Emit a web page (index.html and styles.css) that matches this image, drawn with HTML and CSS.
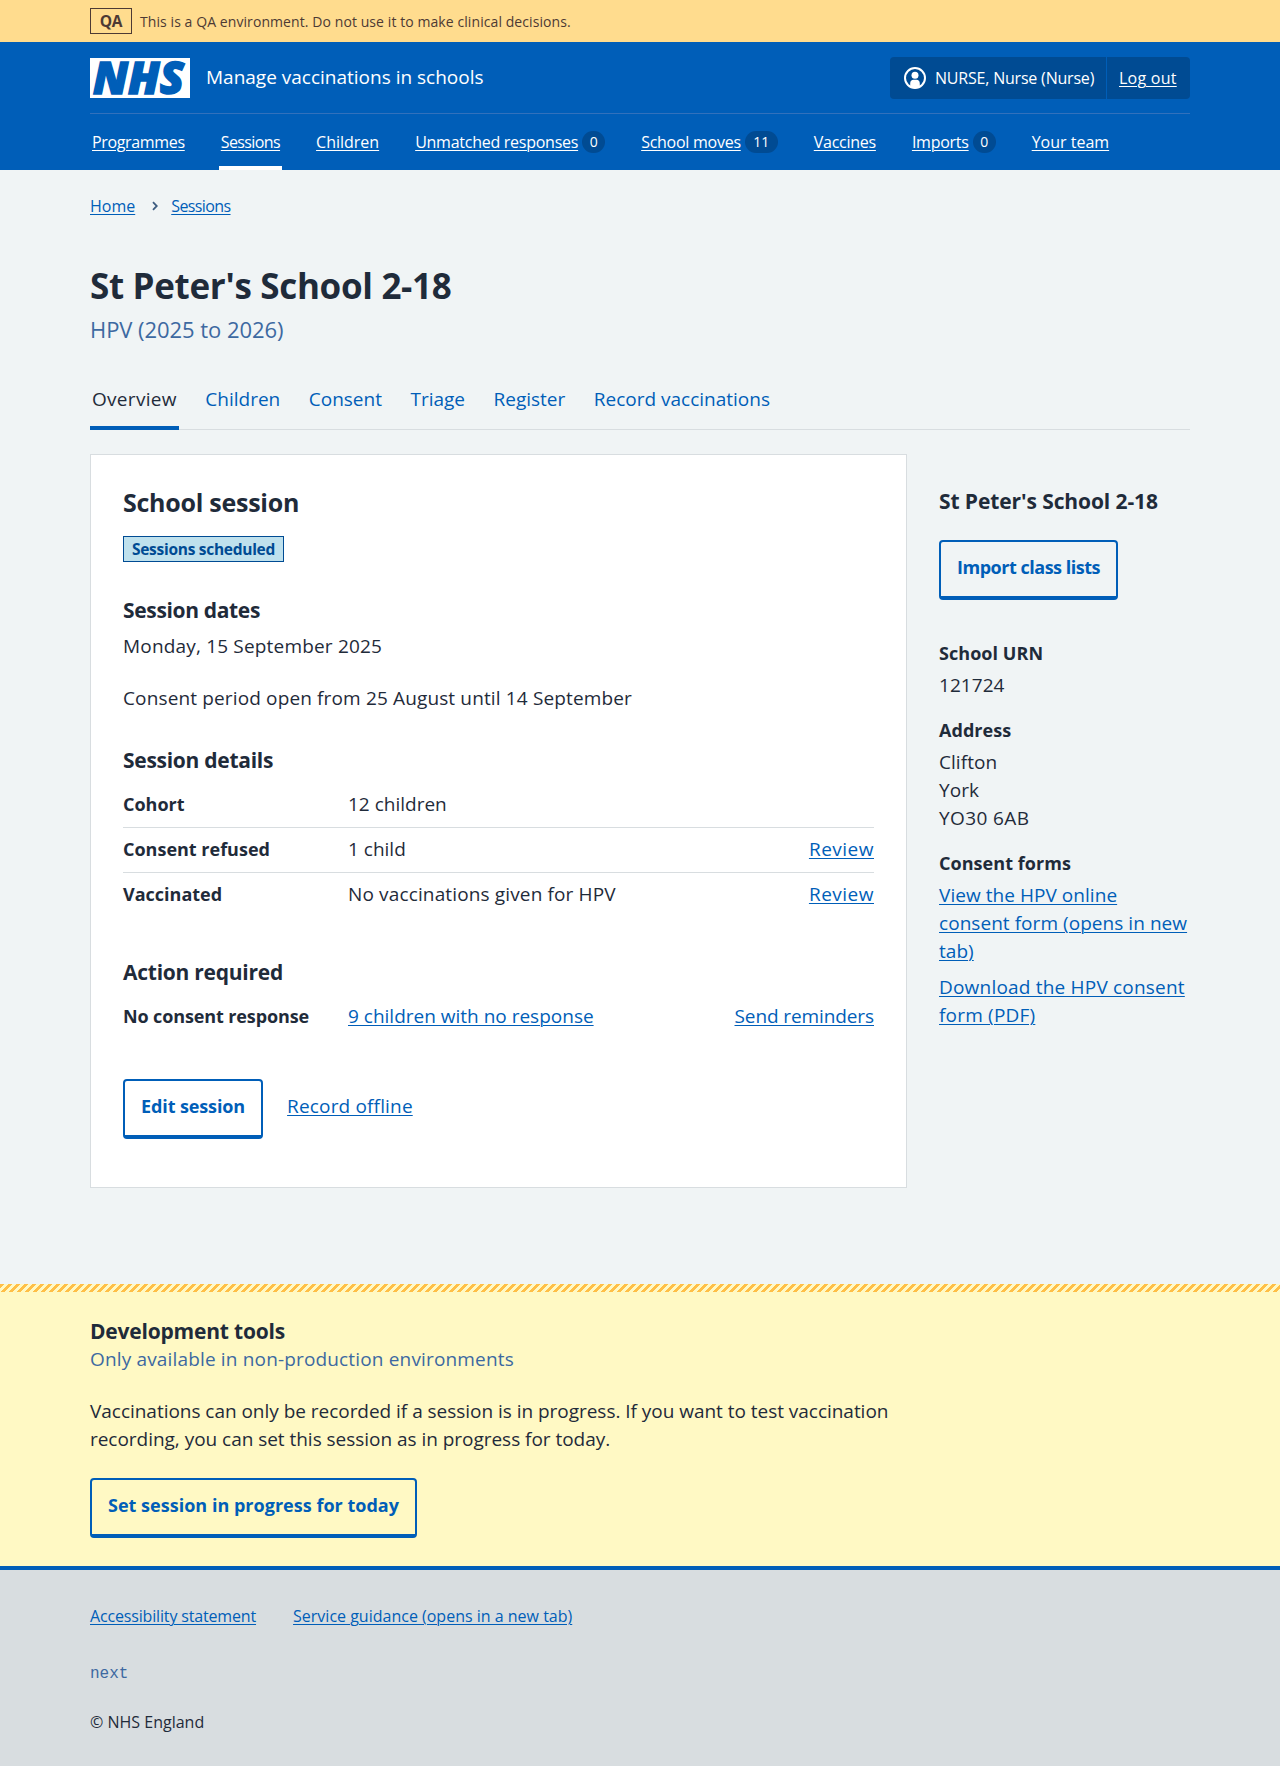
FILE: index.html
```html
<!DOCTYPE html>
<html lang="en">
<head>
<meta charset="utf-8">
<title>St Peter's School 2-18 – Manage vaccinations in schools</title>
<link rel="stylesheet" href="styles.css">
</head>
<body>
<div class="environment">
  <div class="container environment-inner"><strong class="environment-tag">QA</strong><span>This is a QA environment. Do not use it to make clinical decisions.</span></div>
</div>
<header class="header">
  <div class="container">
    <div class="header-top">
      <svg class="logo" viewBox="0 0 100 40" role="img" aria-label="NHS"><rect width="100" height="40" fill="#fff"/><text class="logo-text" x="3" y="36" textLength="91" lengthAdjust="spacingAndGlyphs">NHS</text></svg>
      <span class="service">Manage vaccinations in schools</span>
      <div class="account">
        <span class="account-user">
          <svg class="account-icon" viewBox="0 0 22 22" aria-hidden="true"><circle cx="11" cy="11" r="10" fill="none" stroke="#fff" stroke-width="2"/><circle cx="11" cy="8.3" r="3.5" fill="#fff"/><path d="M6.2 20v-3.6c0-2.2 1.4-3.6 3.2-3.6h3.2c1.8 0 3.2 1.400 3.200 3.600V20c-3 1.600-6.600 1.600-9.600 0z" fill="#fff"/></svg>
          <span>NURSE, Nurse (Nurse)</span>
        </span>
        <span class="account-out"><a href="#">Log out</a></span>
      </div>
    </div>
    <nav class="nav">
      <div class="nav-item"><a href="#">Programmes</a></div>
      <div class="nav-item current"><a href="#">Sessions</a></div>
      <div class="nav-item"><a href="#">Children</a></div>
      <div class="nav-item"><a href="#">Unmatched responses</a><span class="count">0</span></div>
      <div class="nav-item"><a href="#">School moves</a><span class="count count-wide">11</span></div>
      <div class="nav-item"><a href="#">Vaccines</a></div>
      <div class="nav-item"><a href="#">Imports</a><span class="count">0</span></div>
      <div class="nav-item"><a href="#">Your team</a></div>
    </nav>
  </div>
</header>
<main class="container main">
  <nav class="breadcrumb"><a href="#">Home</a><svg class="chevron" viewBox="0 0 6 10" aria-hidden="true"><path d="M1 1.200l3.800 3.800L1 8.800" fill="none" stroke="#3d5c80" stroke-width="1.800"/></svg><a class="crumb-sessions" href="#">Sessions</a></nav>
  <h1>St Peter's School 2-18</h1>
  <p class="caption">HPV (2025 to 2026)</p>
  <nav class="tabs">
    <a class="tab active" href="#">Overview</a>
    <a class="tab" href="#">Children</a>
    <a class="tab" href="#">Consent</a>
    <a class="tab" href="#">Triage</a>
    <a class="tab" href="#">Register</a>
    <a class="tab" href="#">Record vaccinations</a>
  </nav>
  <div class="columns">
    <section class="card">
      <h2>School session</h2>
      <strong class="tag">Sessions scheduled</strong>
      <h3 class="section-title dates-title">Session dates</h3>
      <p class="dates">Monday, 15 September 2025</p>
      <p class="period">Consent period open from 25 August until 14 September</p>
      <h3 class="section-title">Session details</h3>
      <dl class="summary">
        <div class="row"><dt>Cohort</dt><dd>12 children</dd></div>
        <div class="row"><dt>Consent refused</dt><dd>1 child</dd><dd class="action"><a class="review" href="#">Review</a></dd></div>
        <div class="row"><dt>Vaccinated</dt><dd class="outcome">No vaccinations given for HPV</dd><dd class="action"><a class="review" href="#">Review</a></dd></div>
      </dl>
      <h3 class="section-title action-title">Action required</h3>
      <dl class="summary">
        <div class="row"><dt class="no-response">No consent response</dt><dd><a href="#">9 children with no response</a></dd><dd class="action"><a class="send" href="#">Send reminders</a></dd></div>
      </dl>
      <div class="buttons"><a class="button edit" href="#">Edit session</a><a class="offline" href="#">Record offline</a></div>
    </section>
    <aside class="side">
      <h3 class="side-title">St Peter's School 2-18</h3>
      <a class="button import" href="#">Import class lists</a>
      <dl class="facts">
        <dt>School URN</dt><dd>121724</dd>
        <dt>Address</dt><dd>Clifton<br>York<br><span class="postcode">YO30 6AB</span></dd>
        <dt>Consent forms</dt><dd><a href="#">View the HPV online consent form (opens in new tab)</a></dd>
        <dd class="next-link"><a href="#">Download the HPV consent form (PDF)</a></dd>
      </dl>
    </aside>
  </div>
</main>
<section class="dev">
  <div class="container">
    <h3>Development tools</h3>
    <p class="dev-note">Only available in non-production environments</p>
    <p class="dev-text">Vaccinations can only be recorded if a session is in progress. If you want to test vaccination recording, you can set this session as in progress for today.</p>
    <a class="button" href="#">Set session in progress for today</a>
  </div>
</section>
<footer class="footer">
  <div class="container">
    <div class="footer-links"><a class="accessibility" href="#">Accessibility statement</a><a href="#">Service guidance (opens in a new tab)</a></div>
    <p class="version">next</p>
    <p class="copyright">© NHS England</p>
  </div>
</footer>
</body>
</html>
```
FILE: styles.css
```css
* { box-sizing: border-box; }
body { margin: 0; background: #f0f4f5; color: #1f2b3a; font: 400 19px/28px "Open Sans", "Noto Sans", sans-serif; }
h1, h2, h3, p, dl, dd { margin: 0; }
h1, h2, h3, dt, strong { font-weight: 700; }
h3 { font-size: 21px; line-height: 28px; letter-spacing: -0.2px; }
dt { font-size: 18px; }
a { color: #005eb8; text-decoration: underline; text-decoration-thickness: 1px; text-underline-offset: 2px; }
.container { width: 1100px; margin: 0 auto; }

.environment { background: #ffdc8e; color: #4d3a34; font-size: 14px; letter-spacing: 0.08px; }
.environment-inner { display: flex; align-items: center; gap: 8px; height: 42px; }
.environment-inner > span { padding-top: 1px; }
.environment-tag { width: 42px; height: 26px; border: 1px solid #4d3a34; font-size: 15.5px; line-height: 24px; text-align: center; letter-spacing: -0.3px; }

.header { background: #005eb8; color: #fff; }
.header a { color: #fff; }
.header-top { display: flex; align-items: center; height: 72px; padding-top: 1px; border-bottom: 1px solid #3271bc; }
.logo { width: 100px; height: 40px; overflow: visible; }
.logo-text { font: italic 800 44px "Open Sans", sans-serif; fill: #005eb8; stroke: #005eb8; stroke-width: 1.5; }
.service { margin-left: 16px; padding-bottom: 2px; }
.account { display: flex; margin-left: auto; height: 42px; border-radius: 4px; background: #004b93; font-size: 16px; line-height: 42px; }
.account-user { display: flex; align-items: center; gap: 9px; width: 217px; padding-left: 14px; border-right: 1px solid #005eb8; letter-spacing: -0.2px; white-space: nowrap; }
.account-icon { width: 22px; height: 22px; flex: none; }
.account-out { width: 83px; padding-left: 12px; letter-spacing: 0.25px; }
.nav { display: flex; gap: 32px; height: 56px; font-size: 16px; letter-spacing: -0.26px; }
.nav-item { display: flex; align-items: center; padding: 0 2px; white-space: nowrap; }
.nav-item:first-child { letter-spacing: -0.34px; }
.nav-item.current { box-shadow: inset 0 -4px #fff; letter-spacing: -0.6px; }
.nav-item:nth-child(3), .nav-item:nth-child(8) { letter-spacing: 0; }
.count { min-width: 23px; height: 22px; margin-left: 4px; padding: 0 7.500px; border-radius: 11px; background: #004b93; font-size: 14px; line-height: 22px; letter-spacing: 0; text-align: center; }
.count-wide { min-width: 33px; }

.breadcrumb { display: flex; align-items: center; padding-top: 24px; font-size: 16px; line-height: 24px; }
.chevron { width: 6px; height: 10px; margin: 0 13px 0 17px; }
.crumb-sessions { letter-spacing: -0.6px; }
h1 { margin-top: 46px; font-size: 35px; line-height: 44px; letter-spacing: -0.32px; }
.caption { margin-top: 3px; color: #3d69a1; font-size: 22px; line-height: 36px; letter-spacing: -0.05px; }
.tabs { display: flex; gap: 24.5px; height: 63px; margin-top: 20px; box-shadow: inset 0 -1px #d8dde0; line-height: 64px; }
.tab { padding: 0 2px; text-decoration: none; }
.tab.active { box-shadow: inset 0 -4px #005eb8; color: #1f2b3a; letter-spacing: 0.3px; }

.columns { display: grid; grid-template-columns: 817px 251px; gap: 32px; margin-top: 24px; align-items: start; }
.card { padding: 31px 32px 48px; border: 1px solid #d8dde0; background: #fff; }
h2 { font-size: 25px; line-height: 32px; letter-spacing: -0.26px; }
.tag { display: block; width: 161px; height: 26px; margin-top: 18px; border: 1px solid #004b93; background: #bfe1ed; color: #004b93; font-size: 15.5px; line-height: 24px; letter-spacing: -0.28px; text-align: center; }
.section-title { margin-top: 34px; letter-spacing: -0.28px; }
.dates-title { letter-spacing: -0.34px; }
.dates { margin-top: 8px; letter-spacing: 0.18px; }
.period { margin-top: 24px; letter-spacing: 0.14px; }
.summary { margin-top: 9px; }
.row { display: flex; height: 45px; padding: 7px 0 9px; border-bottom: 1px solid #d8dde0; }
.row:last-child { border-bottom: 0; }
.row dt { width: 225px; flex: none; }
.row .action { margin-left: auto; }
.outcome { letter-spacing: 0.14px; }
.no-response { letter-spacing: -0.12px; }
.review { letter-spacing: 0.5px; }
.send { letter-spacing: -0.1px; }
.action-title { margin-top: 40px; letter-spacing: -0.25px; }
.buttons { display: flex; gap: 24px; margin-top: 39px; }
.button { display: inline-block; height: 60px; padding: 11px 16px 0; border: 2px solid #005eb8; border-bottom-width: 4px; border-radius: 4px; font-size: 18px; font-weight: 700; text-decoration: none; white-space: nowrap; vertical-align: top; }
.edit { letter-spacing: -0.11px; }
.offline { padding-top: 13px; letter-spacing: 0.16px; }

.side-title { margin-top: 33px; letter-spacing: -0.1px; }
.import { margin-top: 25px; letter-spacing: -0.48px; }
.facts { margin-top: 39px; letter-spacing: 0.05px; }
.facts dt:not(:first-child) { margin-top: 17px; }
.facts dt { margin-bottom: 4px; }
.postcode { letter-spacing: 0.4px; }
.next-link { margin-top: 8px; letter-spacing: 0.2px; }

.dev { margin-top: 96px; padding: 33px 0 28px; background: repeating-linear-gradient(135deg, #ffbf47 0 2.83px, #fff9c4 2.83px 5.66px) 0 0 / 100% 8px no-repeat #fff9c4; }
.dev-note { color: #3d69a1; letter-spacing: 0.16px; }
.dev-text { width: 817px; margin-top: 24px; letter-spacing: -0.03px; }
.dev .button { margin-top: 25px; letter-spacing: 0.02px; }

.footer { height: 200px; padding-top: 34px; border-top: 4px solid #005eb8; background: #d8dde0; font-size: 16px; line-height: 24px; }
.footer-links { display: flex; gap: 37px; }
.accessibility { letter-spacing: -0.16px; }
.version { margin-top: 34px; color: #3d69a1; font-family: "Liberation Mono", monospace; }
.copyright { margin-top: 24px; }
```
